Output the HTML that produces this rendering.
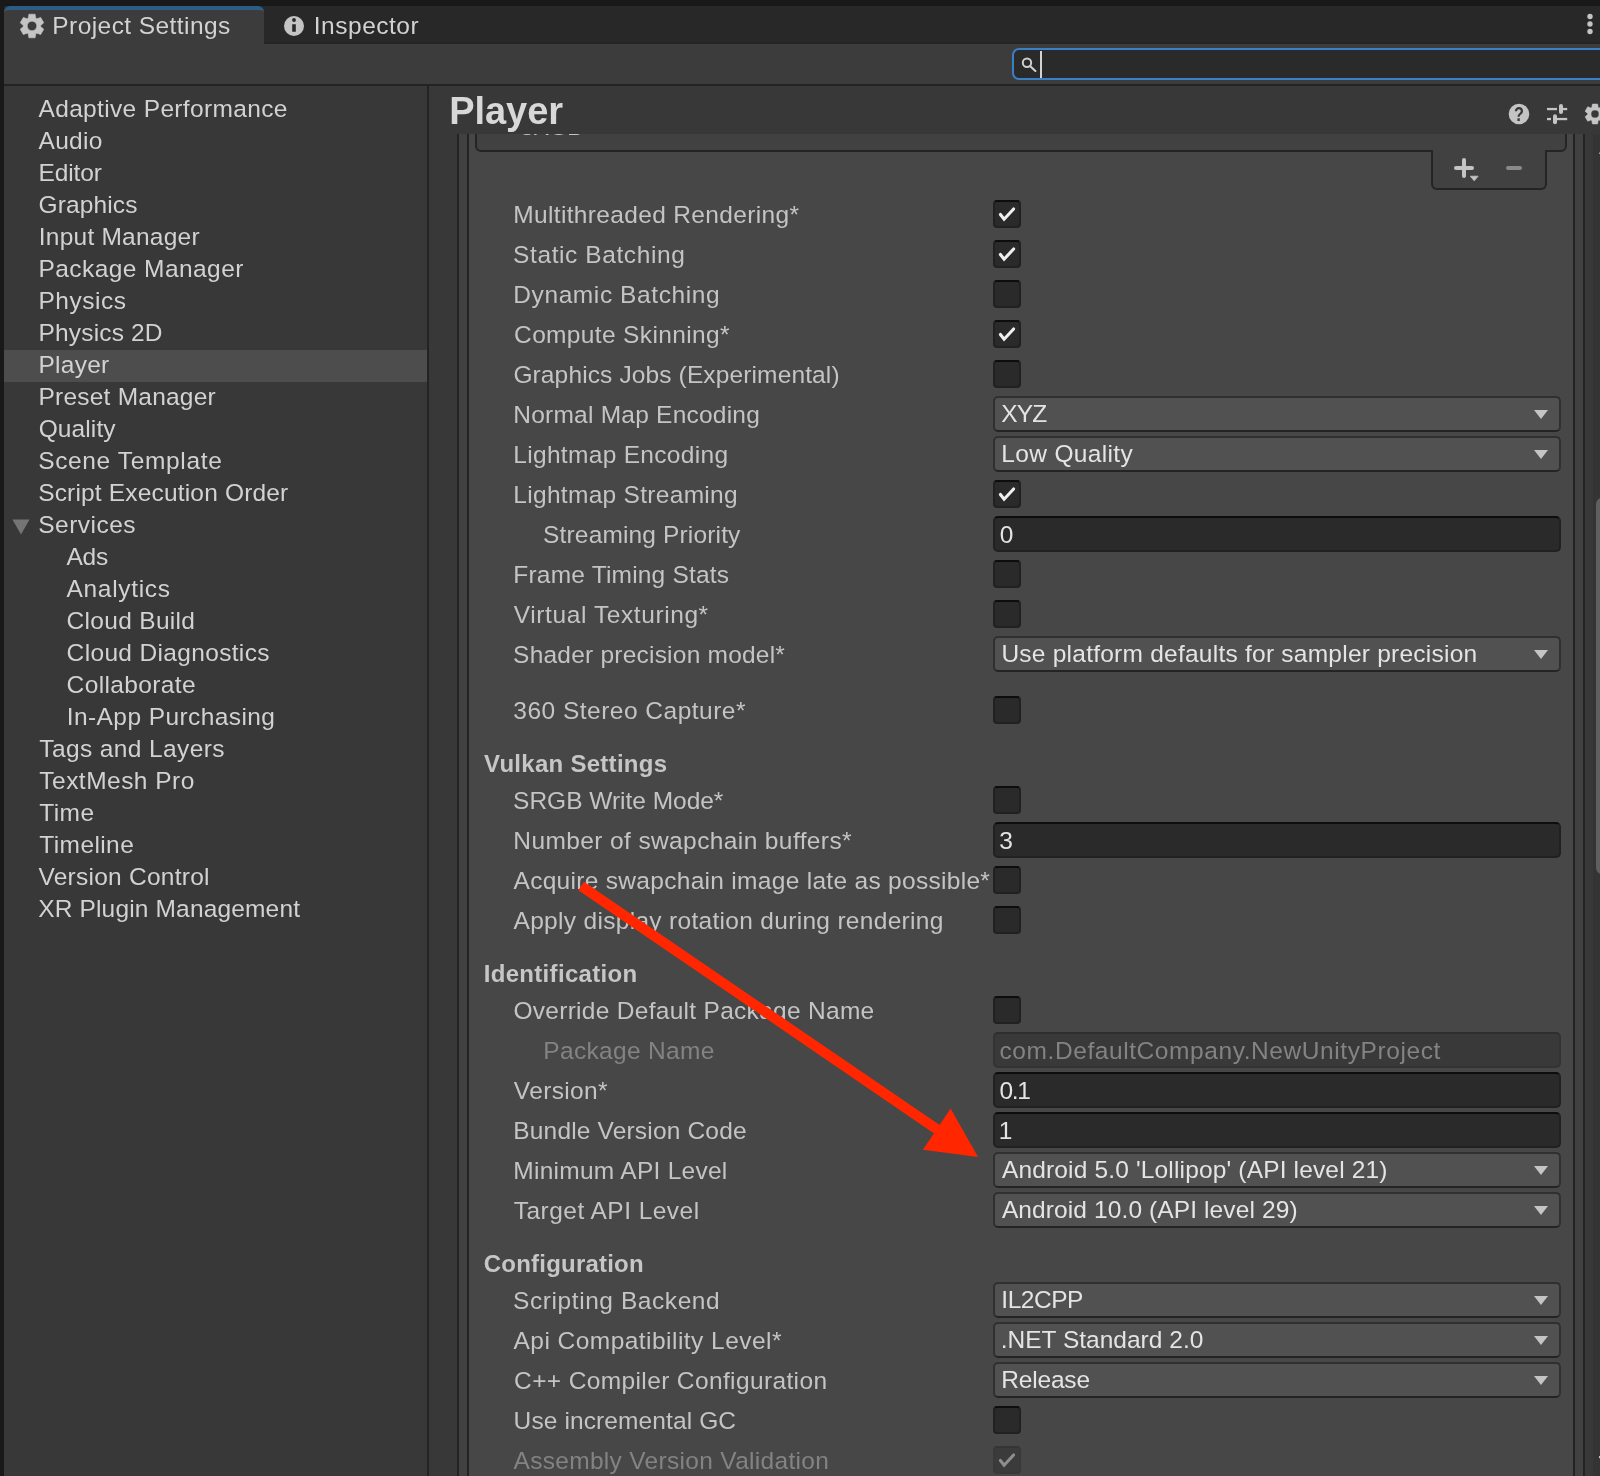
<!DOCTYPE html><html><head><meta charset='utf-8'><title>Project Settings</title><style>
*{box-sizing:border-box;margin:0;padding:0}
html,body{width:1600px;height:1476px;overflow:hidden;background:#191919}
body{position:relative;font-family:"Liberation Sans",sans-serif;font-size:24.5px;color:#c4c4c4}
.a{position:absolute}
.tx{position:absolute;white-space:pre;height:40px;line-height:40px}
.t{color:#d2d2d2}
.l{color:#c4c4c4}
.v{color:#e4e4e4}
.d{color:#838383}
.b{color:#c6c6c6;font-weight:bold}
.h{color:#d8d8d8;font-weight:bold}
.cb{position:absolute;left:993px;width:28px;height:28px;background:#2a2a2a;border:2px solid #212121;border-top-color:#0d0d0d;border-radius:4px}
.cb svg{position:absolute;left:-2px;top:-2px}
.dd{position:absolute;left:993px;width:568px;height:36px;background:#515151;border:2px solid #303030;border-bottom-color:#242424;border-radius:5px}
.dd i{position:absolute;right:11.5px;top:12px;width:0;height:0;border-left:7.5px solid transparent;border-right:7.5px solid transparent;border-top:9px solid #c4c4c4}
.tf{position:absolute;left:993px;width:568px;height:36px;background:#2a2a2a;border:2px solid #212121;border-top-color:#0d0d0d;border-radius:5px}
.cbd{background:#3b3b3b;border-color:#393939;border-top-color:#353535}
.tf.dis{background:#393939;border-color:#333;border-top-color:#2e2e2e}
</style></head><body>
<div class=a style='left:4px;top:6px;width:1596px;height:38px;background:#282828'></div>
<div class=a style='left:4px;top:6px;width:260px;height:38px;background:#3c3c3c;border-top:4px solid #2c5d87;border-radius:6px 6px 0 0'></div>
<div class=a style='left:264px;top:42px;width:1336px;height:2px;background:#242424'></div>
<div class=a style='left:4px;top:44px;width:1596px;height:40px;background:#3c3c3c'></div>
<div class=a style='left:1012px;top:48px;width:640px;height:32px;background:#2a2a2a;border:2px solid #3b7fc6;border-radius:7px'></div>
<div class=a style='left:4px;top:84px;width:1596px;height:2px;background:#232323'></div>
<div class=a style='left:4px;top:86px;width:423px;height:1390px;background:#383838'></div>
<div class=a style='left:4px;top:350px;width:423px;height:32px;background:#4d4d4d'></div>
<div class=a style='left:427px;top:86px;width:2px;height:1390px;background:#232323'></div>
<div class=a style='left:429px;top:86px;width:1171px;height:1390px;background:#383838'></div>
<div class=a id=sc style='left:429px;top:134px;width:1171px;height:1342px;overflow:hidden'>
<div class=a style='left:28px;top:-20px;width:1128px;height:1400px;background:#414141;border:2px solid #232323'></div>
<div class=a style='left:38px;top:-20px;width:1108px;height:1400px;background:#474747;border:2px solid #232323'></div>
<div class=a style='left:1164px;top:0;width:7px;height:1342px;background:#343434'></div>
<div class=a style='left:1167px;top:364px;width:12px;height:376px;background:#5f5f5f;border-radius:6px'></div>
<div class=a style='left:46px;top:-20px;width:1092px;height:38px;background:#414141;border:2px solid #242424;border-radius:0 0 6px 6px'></div>
<div class=a style='left:1002px;top:16px;width:116px;height:39.5px;background:#414141;border:2px solid #242424;border-top:none;border-radius:0 0 6px 6px'></div>
<div class='tx l' style='left:92px;top:-26.6px;letter-spacing:-1px;will-change:transform'>sRGB</div>
</div>
<div class=cb style='top:200px'><svg width=28 height=28 viewBox='0 0 28 28'><path d='M7.4 14.5 L11.1 19.2 L20.6 9.0' fill='none' stroke='#efefef' stroke-width='3.1' stroke-linecap='round' stroke-linejoin='miter'/></svg></div>
<div class=cb style='top:240px'><svg width=28 height=28 viewBox='0 0 28 28'><path d='M7.4 14.5 L11.1 19.2 L20.6 9.0' fill='none' stroke='#efefef' stroke-width='3.1' stroke-linecap='round' stroke-linejoin='miter'/></svg></div>
<div class=cb style='top:320px'><svg width=28 height=28 viewBox='0 0 28 28'><path d='M7.4 14.5 L11.1 19.2 L20.6 9.0' fill='none' stroke='#efefef' stroke-width='3.1' stroke-linecap='round' stroke-linejoin='miter'/></svg></div>
<div class=cb style='top:480px'><svg width=28 height=28 viewBox='0 0 28 28'><path d='M7.4 14.5 L11.1 19.2 L20.6 9.0' fill='none' stroke='#efefef' stroke-width='3.1' stroke-linecap='round' stroke-linejoin='miter'/></svg></div>
<div class=cb style='top:280px'></div>
<div class=cb style='top:360px'></div>
<div class=cb style='top:560px'></div>
<div class=cb style='top:600px'></div>
<div class=cb style='top:696px'></div>
<div class=cb style='top:786px'></div>
<div class=cb style='top:866px'></div>
<div class=cb style='top:906px'></div>
<div class=cb style='top:996px'></div>
<div class=cb style='top:1406px'></div>
<div class='cb cbd' style='top:1446px'><svg width=28 height=28 viewBox='0 0 28 28'><path d='M7.4 14.5 L11.1 19.2 L20.6 9.0' fill='none' stroke='#8e8e8e' stroke-width='3.1' stroke-linecap='round' stroke-linejoin='miter'/></svg></div>
<div class=dd style='top:396px'><i></i></div>
<div class=dd style='top:436px'><i></i></div>
<div class=dd style='top:636px'><i></i></div>
<div class=dd style='top:1152px'><i></i></div>
<div class=dd style='top:1192px'><i></i></div>
<div class=dd style='top:1282px'><i></i></div>
<div class=dd style='top:1322px'><i></i></div>
<div class=dd style='top:1362px'><i></i></div>
<div class=tf style='top:516px'></div>
<div class=tf style='top:822px'></div>
<div class=tf style='top:1072px'></div>
<div class=tf style='top:1112px'></div>
<div class='tf dis' style='top:1032px'></div>
<svg class=a style='left:0;top:0;will-change:transform' width=1600 height=1476 viewBox='0 0 1600 1476'><path fill='#c4c4c4' fill-rule='evenodd' stroke='#c4c4c4' stroke-width='0.6' stroke-linejoin='round' d='M35.80 18.17L35.10 14.20L28.90 14.20L28.20 18.17A8.70 8.70 0 0 0 27.12 18.80L23.33 17.42L20.23 22.78L23.32 25.38A8.70 8.70 0 0 0 23.32 26.62L20.23 29.22L23.33 34.58L27.12 33.20A8.70 8.70 0 0 0 28.20 33.83L28.90 37.80L35.10 37.80L35.80 33.83A8.70 8.70 0 0 0 36.88 33.20L40.67 34.58L43.77 29.22L40.68 26.62A8.70 8.70 0 0 0 40.68 25.38L43.77 22.78L40.67 17.42L36.88 18.80A8.70 8.70 0 0 0 35.80 18.17ZM27.20 26.00a4.8 4.8 0 1 0 9.6 0a4.8 4.8 0 1 0 -9.6 0Z'/><path fill='#c4c4c4' fill-rule='evenodd' d='M284 26a10 10 0 1 0 20 0a10 10 0 1 0 -20 0ZM292.1 20a1.9 1.9 0 1 0 3.8 0a1.9 1.9 0 1 0 -3.8 0ZM292.2 24.3h3.6v7.4h-3.6Z'/><circle cx='1590' cy='16.5' r='2.7' fill='#c4c4c4'/><circle cx='1590' cy='24' r='2.7' fill='#c4c4c4'/><circle cx='1590' cy='31.5' r='2.7' fill='#c4c4c4'/><circle cx='1027' cy='62.8' r='4.2' fill='none' stroke='#d0d0d0' stroke-width='2'/><path d='M1030 66L1035.4 71' stroke='#d0d0d0' stroke-width='2.1' stroke-linecap='round'/><rect x='1040' y='51' width='2' height='27' fill='#d2d2d2'/><circle cx='1519' cy='114' r='10.3' fill='#c4c4c4'/><text x='0' y='121.3' transform='translate(1519 0) scale(.78 1)' text-anchor='middle' font-family='Liberation Sans, sans-serif' font-weight='bold' font-size='20.8' fill='#383838'>?</text><g fill='#c4c4c4'><rect x='1547' y='107.9' width='10' height='2.3'/><rect x='1563' y='107.9' width='4.2' height='2.3'/><rect x='1559' y='104' width='4' height='10' rx='2'/><rect x='1547' y='117.9' width='4' height='2.3'/><rect x='1557' y='117.9' width='10.2' height='2.3'/><rect x='1553' y='114.2' width='4' height='10' rx='2'/></g><path fill='#c4c4c4' fill-rule='evenodd' stroke='#c4c4c4' stroke-width='0.6' stroke-linejoin='round' d='M1598.20 107.44L1597.60 104.10L1592.40 104.10L1591.80 107.44A7.30 7.30 0 0 0 1590.92 107.95L1587.73 106.80L1585.13 111.30L1587.72 113.49A7.30 7.30 0 0 0 1587.72 114.51L1585.13 116.70L1587.73 121.20L1590.92 120.05A7.30 7.30 0 0 0 1591.80 120.56L1592.40 123.90L1597.60 123.90L1598.20 120.56A7.30 7.30 0 0 0 1599.08 120.05L1602.27 121.20L1604.87 116.70L1602.28 114.51A7.30 7.30 0 0 0 1602.28 113.49L1604.87 111.30L1602.27 106.80L1599.08 107.95A7.30 7.30 0 0 0 1598.20 107.44ZM1590.95 114.00a4.05 4.05 0 1 0 8.1 0a4.05 4.05 0 1 0 -8.1 0Z'/><path d='M12.4 519.6H29.6L21 534.6Z' fill='#757575'/><g fill='#c4c4c4'><rect x='1454' y='166' width='20' height='4' rx='2'/><rect x='1462' y='158' width='4' height='20' rx='2'/><path d='M1470.3 176.2h7.8l-3.9 4.6Z' stroke='#c4c4c4' stroke-width='0.8' stroke-linejoin='round'/></g><rect x='1506' y='166' width='16' height='4' rx='2' fill='#8a8a8a'/><path d='M1600 152l-1.3 1.8h1.3Z' fill='#c4c4c4'/><rect x='1599' y='1456' width='1' height='2.2' fill='#c4c4c4'/></svg>
<div id=txt style='position:absolute;left:0;top:0;width:1600px;height:1476px;will-change:transform'>
<div class='tx t' style='left:38.5px;top:88.6px;letter-spacing:0.34px'>Adaptive Performance</div>
<div class='tx t' style='left:38.5px;top:120.6px;letter-spacing:0.29px'>Audio</div>
<div class='tx t' style='left:38.5px;top:152.6px;letter-spacing:-0.10px'>Editor</div>
<div class='tx t' style='left:38.6px;top:184.6px;letter-spacing:0.12px'>Graphics</div>
<div class='tx t' style='left:38.8px;top:216.6px;letter-spacing:0.23px'>Input Manager</div>
<div class='tx t' style='left:38.5px;top:248.6px;letter-spacing:0.43px'>Package Manager</div>
<div class='tx t' style='left:38.5px;top:280.6px;letter-spacing:0.52px'>Physics</div>
<div class='tx t' style='left:38.5px;top:312.6px;letter-spacing:0.17px'>Physics 2D</div>
<div class='tx t' style='left:38.5px;top:344.6px;letter-spacing:0.26px'>Player</div>
<div class='tx t' style='left:38.5px;top:376.6px;letter-spacing:0.22px'>Preset Manager</div>
<div class='tx t' style='left:38.7px;top:408.6px;letter-spacing:0.10px'>Quality</div>
<div class='tx t' style='left:38.2px;top:440.6px;letter-spacing:0.64px'>Scene Template</div>
<div class='tx t' style='left:38.2px;top:472.6px;letter-spacing:0.17px'>Script Execution Order</div>
<div class='tx t' style='left:38.2px;top:504.6px;letter-spacing:0.49px'>Services</div>
<div class='tx t' style='left:66.5px;top:536.6px;letter-spacing:-0.24px'>Ads</div>
<div class='tx t' style='left:66.5px;top:568.6px;letter-spacing:0.68px'>Analytics</div>
<div class='tx t' style='left:66.6px;top:600.6px;letter-spacing:0.31px'>Cloud Build</div>
<div class='tx t' style='left:66.6px;top:632.6px;letter-spacing:0.34px'>Cloud Diagnostics</div>
<div class='tx t' style='left:66.6px;top:664.6px;letter-spacing:0.37px'>Collaborate</div>
<div class='tx t' style='left:66.8px;top:696.6px;letter-spacing:0.41px'>In-App Purchasing</div>
<div class='tx t' style='left:39.3px;top:728.6px;letter-spacing:0.39px'>Tags and Layers</div>
<div class='tx t' style='left:39.3px;top:760.6px;letter-spacing:0.48px'>TextMesh Pro</div>
<div class='tx t' style='left:39.3px;top:792.6px;letter-spacing:0.41px'>Time</div>
<div class='tx t' style='left:39.3px;top:824.6px;letter-spacing:0.40px'>Timeline</div>
<div class='tx t' style='left:38.5px;top:856.6px;letter-spacing:0.25px'>Version Control</div>
<div class='tx t' style='left:38.2px;top:888.6px;letter-spacing:0.16px'>XR Plugin Management</div>
<div class='tx t' style='left:52.3px;top:6.3px;letter-spacing:0.43px'>Project Settings</div>
<div class='tx t' style='left:313.8px;top:6.3px;letter-spacing:0.51px'>Inspector</div>
<div class='tx h' style='left:449.3px;top:90.7px;letter-spacing:-0.07px;font-size:38px'>Player</div>
<div class='tx l' style='left:513.3px;top:194.7px;letter-spacing:0.34px'>Multithreaded Rendering*</div>
<div class='tx l' style='left:513.1px;top:234.7px;letter-spacing:0.59px'>Static Batching</div>
<div class='tx l' style='left:513.3px;top:274.7px;letter-spacing:0.59px'>Dynamic Batching</div>
<div class='tx l' style='left:514.1px;top:314.7px;letter-spacing:0.35px'>Compute Skinning*</div>
<div class='tx l' style='left:513.4px;top:354.7px;letter-spacing:0.13px'>Graphics Jobs (Experimental)</div>
<div class='tx l' style='left:513.3px;top:394.7px;letter-spacing:0.23px'>Normal Map Encoding</div>
<div class='tx l' style='left:513.3px;top:434.7px;letter-spacing:0.31px'>Lightmap Encoding</div>
<div class='tx l' style='left:513.3px;top:474.7px;letter-spacing:0.30px'>Lightmap Streaming</div>
<div class='tx l' style='left:543.1px;top:514.7px;letter-spacing:0.15px'>Streaming Priority</div>
<div class='tx l' style='left:513.3px;top:554.7px;letter-spacing:0.20px'>Frame Timing Stats</div>
<div class='tx l' style='left:513.8px;top:594.7px;letter-spacing:0.59px'>Virtual Texturing*</div>
<div class='tx l' style='left:513.1px;top:634.7px;letter-spacing:0.22px'>Shader precision model*</div>
<div class='tx l' style='left:513.3px;top:690.7px;letter-spacing:0.49px'>360 Stereo Capture*</div>
<div class='tx l' style='left:513.1px;top:780.7px;letter-spacing:-0.02px'>SRGB Write Mode*</div>
<div class='tx l' style='left:513.3px;top:820.7px;letter-spacing:0.39px'>Number of swapchain buffers*</div>
<div class='tx l' style='left:513.5px;top:860.7px;letter-spacing:0.30px'>Acquire swapchain image late as possible*</div>
<div class='tx l' style='left:513.5px;top:900.7px;letter-spacing:0.31px'>Apply display rotation during rendering</div>
<div class='tx l' style='left:513.4px;top:990.7px;letter-spacing:0.29px'>Override Default Package Name</div>
<div class='tx d' style='left:543.3px;top:1030.7px;letter-spacing:0.32px'>Package Name</div>
<div class='tx l' style='left:513.8px;top:1070.7px;letter-spacing:0.37px'>Version*</div>
<div class='tx l' style='left:513.3px;top:1110.7px;letter-spacing:0.17px'>Bundle Version Code</div>
<div class='tx l' style='left:513.3px;top:1150.7px;letter-spacing:0.27px'>Minimum API Level</div>
<div class='tx l' style='left:513.8px;top:1190.7px;letter-spacing:0.46px'>Target API Level</div>
<div class='tx l' style='left:513.1px;top:1280.7px;letter-spacing:0.57px'>Scripting Backend</div>
<div class='tx l' style='left:513.5px;top:1320.7px;letter-spacing:0.46px'>Api Compatibility Level*</div>
<div class='tx l' style='left:514.1px;top:1360.7px;letter-spacing:0.37px'>C++ Compiler Configuration</div>
<div class='tx l' style='left:513.6px;top:1400.7px;letter-spacing:0.11px'>Use incremental GC</div>
<div class='tx d' style='left:513.5px;top:1440.7px;letter-spacing:0.31px'>Assembly Version Validation</div>
<div class='tx b' style='left:484.0px;top:743.8px;letter-spacing:0.28px;font-size:24px'>Vulkan Settings</div>
<div class='tx b' style='left:483.7px;top:953.8px;letter-spacing:0.32px;font-size:24px'>Identification</div>
<div class='tx b' style='left:483.8px;top:1243.8px;letter-spacing:0.21px;font-size:24px'>Configuration</div>
<div class='tx v' style='left:1001.3px;top:394.4px;letter-spacing:-0.88px'>XYZ</div>
<div class='tx v' style='left:1001.3px;top:434.4px;letter-spacing:0.34px'>Low Quality</div>
<div class='tx v' style='left:999.7px;top:514.6px;letter-spacing:0.00px'>0</div>
<div class='tx v' style='left:1001.4px;top:634.4px;letter-spacing:0.24px'>Use platform defaults for sampler precision</div>
<div class='tx v' style='left:999.3px;top:820.6px;letter-spacing:0.00px'>3</div>
<div class='tx d' style='left:999.5px;top:1030.6px;letter-spacing:0.58px'>com.DefaultCompany.NewUnityProject</div>
<div class='tx v' style='left:999.6px;top:1070.6px;letter-spacing:-1.36px'>0.1</div>
<div class='tx v' style='left:998.7px;top:1110.6px;letter-spacing:0.00px'>1</div>
<div class='tx v' style='left:1001.9px;top:1150.4px;letter-spacing:0.16px'>Android 5.0 &#x27;Lollipop&#x27; (API level 21)</div>
<div class='tx v' style='left:1001.9px;top:1190.4px;letter-spacing:0.11px'>Android 10.0 (API level 29)</div>
<div class='tx v' style='left:1001.3px;top:1280.4px;letter-spacing:-0.46px'>IL2CPP</div>
<div class='tx v' style='left:1000.7px;top:1320.4px;letter-spacing:0.01px'>.NET Standard 2.0</div>
<div class='tx v' style='left:1001.3px;top:1360.4px;letter-spacing:-0.19px'>Release</div>
</div>
<svg class=a style='left:0;top:0' width=1600 height=1476 viewBox='0 0 1600 1476'><line x1='581.1' y1='886' x2='938' y2='1130' stroke='#ff2600' stroke-width='10'/><polygon points='978.1,1156.9 950.6,1108.5 922.9,1149.75' fill='#ff2600'/></svg>
</body></html>
